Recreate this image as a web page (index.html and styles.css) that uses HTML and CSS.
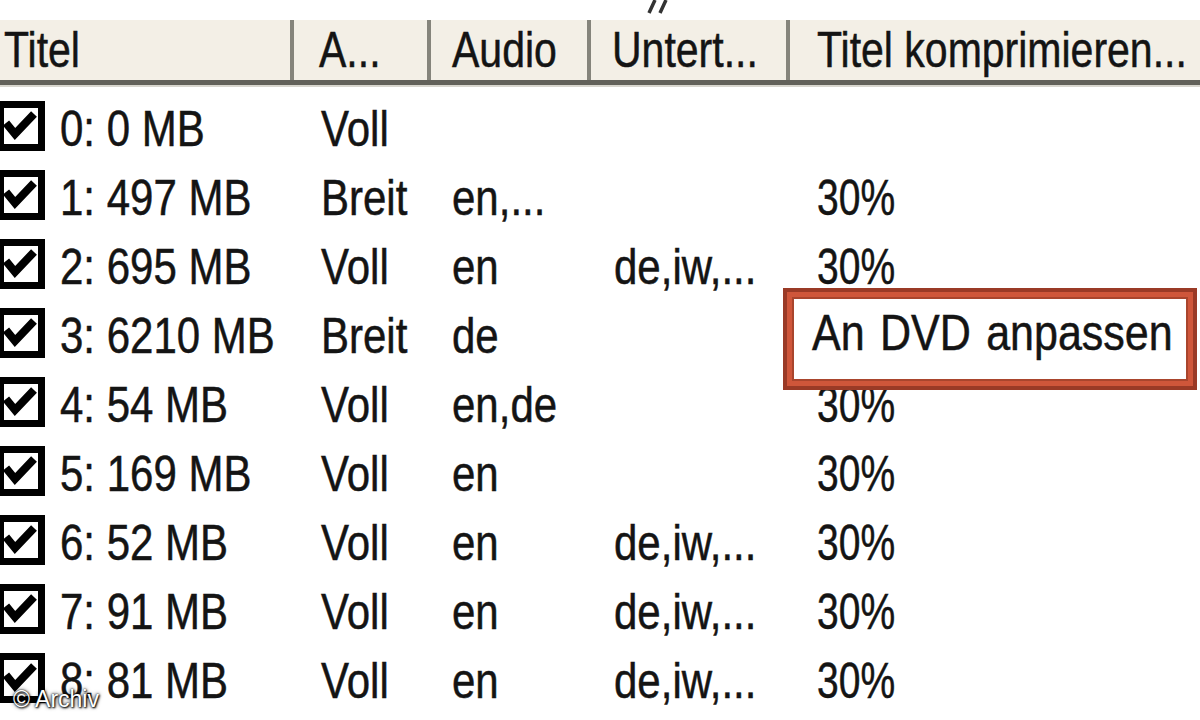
FILE: index.html
```html
<!DOCTYPE html>
<html lang="de">
<head>
<meta charset="utf-8">
<title>Titel komprimieren</title>
<link rel="stylesheet" href="styles.css">
</head>
<body>
<div class="top"></div>
<div class="header">
  <div class="hcell c1"><span class="t">Titel</span></div>
  <div class="hcell c2"><span class="t">A...</span></div>
  <div class="hcell c3"><span class="t">Audio</span></div>
  <div class="hcell c4"><span class="t">Untert...</span></div>
  <div class="hcell c5 last"><span class="t">Titel komprimieren...</span></div>
</div>
<div class="list">
  <div class="row">
    <div class="cell c1"><svg class="cb" viewBox="0 0 48 50" width="48" height="50"><rect x="3.5" y="3.5" width="41" height="43" fill="#fff" stroke="#000" stroke-width="7"/><path d="M9 22 L18 33 L37 13" fill="none" stroke="#000" stroke-width="8"/></svg><span class="t">0: 0 MB</span></div>
    <div class="cell c2"><span class="t">Voll</span></div>
    <div class="cell c3"></div>
    <div class="cell c4"></div>
    <div class="cell c5"></div>
  </div>
  <div class="row">
    <div class="cell c1"><svg class="cb" viewBox="0 0 48 50" width="48" height="50"><rect x="3.5" y="3.5" width="41" height="43" fill="#fff" stroke="#000" stroke-width="7"/><path d="M9 22 L18 33 L37 13" fill="none" stroke="#000" stroke-width="8"/></svg><span class="t">1: 497 MB</span></div>
    <div class="cell c2"><span class="t">Breit</span></div>
    <div class="cell c3"><span class="t">en,...</span></div>
    <div class="cell c4"></div>
    <div class="cell c5"><span class="t pct">30%</span></div>
  </div>
  <div class="row">
    <div class="cell c1"><svg class="cb" viewBox="0 0 48 50" width="48" height="50"><rect x="3.5" y="3.5" width="41" height="43" fill="#fff" stroke="#000" stroke-width="7"/><path d="M9 22 L18 33 L37 13" fill="none" stroke="#000" stroke-width="8"/></svg><span class="t">2: 695 MB</span></div>
    <div class="cell c2"><span class="t">Voll</span></div>
    <div class="cell c3"><span class="t">en</span></div>
    <div class="cell c4"><span class="t">de,iw,...</span></div>
    <div class="cell c5"><span class="t pct">30%</span></div>
  </div>
  <div class="row">
    <div class="cell c1"><svg class="cb" viewBox="0 0 48 50" width="48" height="50"><rect x="3.5" y="3.5" width="41" height="43" fill="#fff" stroke="#000" stroke-width="7"/><path d="M9 22 L18 33 L37 13" fill="none" stroke="#000" stroke-width="8"/></svg><span class="t">3: 6210 MB</span></div>
    <div class="cell c2"><span class="t">Breit</span></div>
    <div class="cell c3"><span class="t">de</span></div>
    <div class="cell c4"></div>
    <div class="cell c5"></div>
  </div>
  <div class="row">
    <div class="cell c1"><svg class="cb" viewBox="0 0 48 50" width="48" height="50"><rect x="3.5" y="3.5" width="41" height="43" fill="#fff" stroke="#000" stroke-width="7"/><path d="M9 22 L18 33 L37 13" fill="none" stroke="#000" stroke-width="8"/></svg><span class="t">4: 54 MB</span></div>
    <div class="cell c2"><span class="t">Voll</span></div>
    <div class="cell c3"><span class="t">en,de</span></div>
    <div class="cell c4"></div>
    <div class="cell c5"><span class="t pct">30%</span></div>
  </div>
  <div class="row">
    <div class="cell c1"><svg class="cb" viewBox="0 0 48 50" width="48" height="50"><rect x="3.5" y="3.5" width="41" height="43" fill="#fff" stroke="#000" stroke-width="7"/><path d="M9 22 L18 33 L37 13" fill="none" stroke="#000" stroke-width="8"/></svg><span class="t">5: 169 MB</span></div>
    <div class="cell c2"><span class="t">Voll</span></div>
    <div class="cell c3"><span class="t">en</span></div>
    <div class="cell c4"></div>
    <div class="cell c5"><span class="t pct">30%</span></div>
  </div>
  <div class="row">
    <div class="cell c1"><svg class="cb" viewBox="0 0 48 50" width="48" height="50"><rect x="3.5" y="3.5" width="41" height="43" fill="#fff" stroke="#000" stroke-width="7"/><path d="M9 22 L18 33 L37 13" fill="none" stroke="#000" stroke-width="8"/></svg><span class="t">6: 52 MB</span></div>
    <div class="cell c2"><span class="t">Voll</span></div>
    <div class="cell c3"><span class="t">en</span></div>
    <div class="cell c4"><span class="t">de,iw,...</span></div>
    <div class="cell c5"><span class="t pct">30%</span></div>
  </div>
  <div class="row">
    <div class="cell c1"><svg class="cb" viewBox="0 0 48 50" width="48" height="50"><rect x="3.5" y="3.5" width="41" height="43" fill="#fff" stroke="#000" stroke-width="7"/><path d="M9 22 L18 33 L37 13" fill="none" stroke="#000" stroke-width="8"/></svg><span class="t">7: 91 MB</span></div>
    <div class="cell c2"><span class="t">Voll</span></div>
    <div class="cell c3"><span class="t">en</span></div>
    <div class="cell c4"><span class="t">de,iw,...</span></div>
    <div class="cell c5"><span class="t pct">30%</span></div>
  </div>
  <div class="row">
    <div class="cell c1"><svg class="cb" viewBox="0 0 48 50" width="48" height="50"><rect x="3.5" y="3.5" width="41" height="43" fill="#fff" stroke="#000" stroke-width="7"/><path d="M9 22 L18 33 L37 13" fill="none" stroke="#000" stroke-width="8"/></svg><span class="t">8: 81 MB</span></div>
    <div class="cell c2"><span class="t">Voll</span></div>
    <div class="cell c3"><span class="t">en</span></div>
    <div class="cell c4"><span class="t">de,iw,...</span></div>
    <div class="cell c5"><span class="t pct">30%</span></div>
  </div>
</div>
<div class="edit"><span class="t">An DVD anpassen</span></div>
<svg class="marks" viewBox="0 0 30 14" width="30" height="14"><path d="M11 0 L5 13 M22 0 L16 13" stroke="#333" stroke-width="3.5" fill="none"/></svg>
<div class="wm">© Archiv</div>
</body>
</html>
```
FILE: styles.css
```css
html, body {
  margin: 0;
  padding: 0;
  background: #fff;
}
body {
  width: 1200px;
  height: 720px;
  overflow: hidden;
  position: relative;
  font-family: "Liberation Sans", Arial, sans-serif;
  font-size: 50px;
  color: #141414;
  -webkit-text-stroke: 0.5px #141414;
}
.t {
  display: inline-block;
  white-space: nowrap;
  transform: scaleX(0.84);
  transform-origin: 0 50%;
}
.top {
  height: 20px;
}
.header {
  display: grid;
  grid-template-columns: 294px 137px 160px 199px 1fr;
  height: 60px;
  line-height: 60px;
  background: #f3efe6;
  border-bottom: 5px solid #62615a;
  box-shadow: 0 2px 0 #d8d6ce;
  overflow: hidden;
}
.header .t {
  transform: scaleX(0.82);
}
.hcell {
  box-sizing: border-box;
  border-right: 4px solid #85847b;
  white-space: nowrap;
  overflow: hidden;
}
.hcell.last {
  border-right: none;
}
.header .c1 { padding-left: 4px; }
.header .c2 { padding-left: 25px; }
.header .c3 { padding-left: 21px; }
.header .c4 { padding-left: 21px; }
.header .c5 { padding-left: 27px; }
.list {
  padding-top: 10px;
}
.row {
  display: grid;
  grid-template-columns: 294px 137px 160px 199px 1fr;
  height: 69px;
  line-height: 69px;
  overflow: hidden;
}
.cell {
  box-sizing: border-box;
  white-space: nowrap;
  overflow: hidden;
}
.row .c1 {
  display: flex;
  align-items: flex-start;
}
.cb {
  flex: none;
  margin-left: -3px;
  margin-top: 6px;
  margin-right: 15px;
}
.row .c2 { padding-left: 27px; }
.row .c3 { padding-left: 21px; }
.row .c4 { padding-left: 23px; }
.row .c5 { padding-left: 27px; }
.row .pct {
  transform: scaleX(0.78);
}
.edit {
  position: absolute;
  left: 783px;
  top: 288px;
  width: 414px;
  height: 102px;
  box-sizing: border-box;
  border: 4px solid #9a3a26;
  box-shadow: inset 0 0 0 5px #cf563a, inset 0 0 0 7px #a9452d;
  background: #fff;
  padding-left: 25px;
  padding-top: 13px;
  line-height: 57px;
  overflow: hidden;
  white-space: nowrap;
}
.edit .t {
  transform: scaleX(0.86);
  word-spacing: 4px;
}
.marks {
  position: absolute;
  left: 644px;
  top: 0;
}
.wm {
  position: absolute;
  left: 13px;
  top: 688px;
  font-size: 23px;
  line-height: 23px;
  color: #fff;
  -webkit-text-stroke: 0;
  text-shadow: 0 0 2px #000, 1px 1px 2px #000, 0 0 4px rgba(0,0,0,0.8);
}
```
